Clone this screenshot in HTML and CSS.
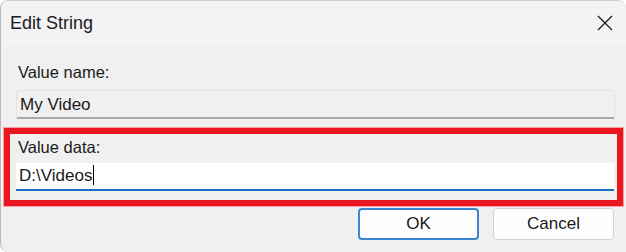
FILE: index.html
```html
<!DOCTYPE html>
<html>
<head>
<meta charset="utf-8">
<link rel="stylesheet" href="styles.css">
</head>
<body>
<div class="dialog">
  <div class="titlebar">
    <span class="title">Edit String</span>
    <span class="close">
      <svg width="16" height="16" viewBox="0 0 16 16"><path d="M1 1 L15 15 M15 1 L1 15" stroke="#1c1c1c" stroke-width="1.3" fill="none"/></svg>
    </span>
  </div>
  <div class="content">
    <div class="label first">Value name:</div>
    <div class="field readonly">My Video</div>
    <div class="highlight">
      <div class="label">Value data:</div>
      <div class="field active">D:\Videos<span class="caret"></span></div>
    </div>
    <div class="buttons">
      <button class="btn primary">OK</button>
      <button class="btn">Cancel</button>
    </div>
  </div>
</div>
</body>
</html>
```
FILE: styles.css
```css
* { box-sizing: border-box; }
html, body { margin: 0; padding: 0; background: #ffffff; }
body { width: 626px; height: 252px; overflow: hidden; font-family: "Liberation Sans", Arial, sans-serif; color: #1a1a1a; }
.dialog {
  width: 626px; height: 252px;
  background: #f0f0f0;
  border-left: 1px solid #b9b9b9;
  border-top: 1px solid #cfcfcf;
  border-radius: 8px 8px 0 8px;
  overflow: hidden;
  display: flex; flex-direction: column;
}
.titlebar {
  height: 45px;
  background: #f3f3f6;
  display: flex; align-items: center; justify-content: space-between;
  padding: 0 13px 0 9px;
}
.title { font-size: 18px; color: #1a1a1a; }
.close { display: flex; width: 16px; height: 16px; margin-top: -2px; }
.content { padding: 0 11px 0 15px; display: flex; flex-direction: column; }
.label { height: 20px; line-height: 20px; font-size: 16.5px; padding-left: 2px; }
.label.first { margin-top: 16px; }
.field {
  height: 29px; line-height: 27px; font-size: 17px; padding-left: 3px;
  margin-top: 8px;
}
.readonly {
  background: #f0f0f0;
  border: 1px solid #e2e2e2;
  border-bottom: 2px solid #a9a9a9;
  border-radius: 2px;
  width: 599px;
}
.highlight {
  margin: 9px 0 0 -12px;
  width: 619px; height: 78px;
  border: 6px solid #e8161e;
  box-shadow: 0 0 0 1px #f2a0a3;
  padding: 3px 3px 0 6px;
}
.active {
  margin-top: 6px;
  height: 28px; line-height: 26px;
  background: #ffffff;
  border-bottom: 2px solid #1a6fc4;
  width: 598px;
}
.caret { display: inline-block; width: 1px; height: 20px; background: #000; vertical-align: -4px; margin-left: 1px; }
.buttons { display: flex; justify-content: flex-end; gap: 14px; margin-top: 2px; padding-right: 1px; }
.btn {
  width: 121px; height: 32px;
  font-family: "Liberation Sans", Arial, sans-serif; font-size: 17px; color: #1a1a1a;
  background: #fdfdfd; border: 1px solid #d3d3d3; border-radius: 4px;
  padding: 0;
}
.btn.primary { border: 2px solid #3d86d4; }
```
